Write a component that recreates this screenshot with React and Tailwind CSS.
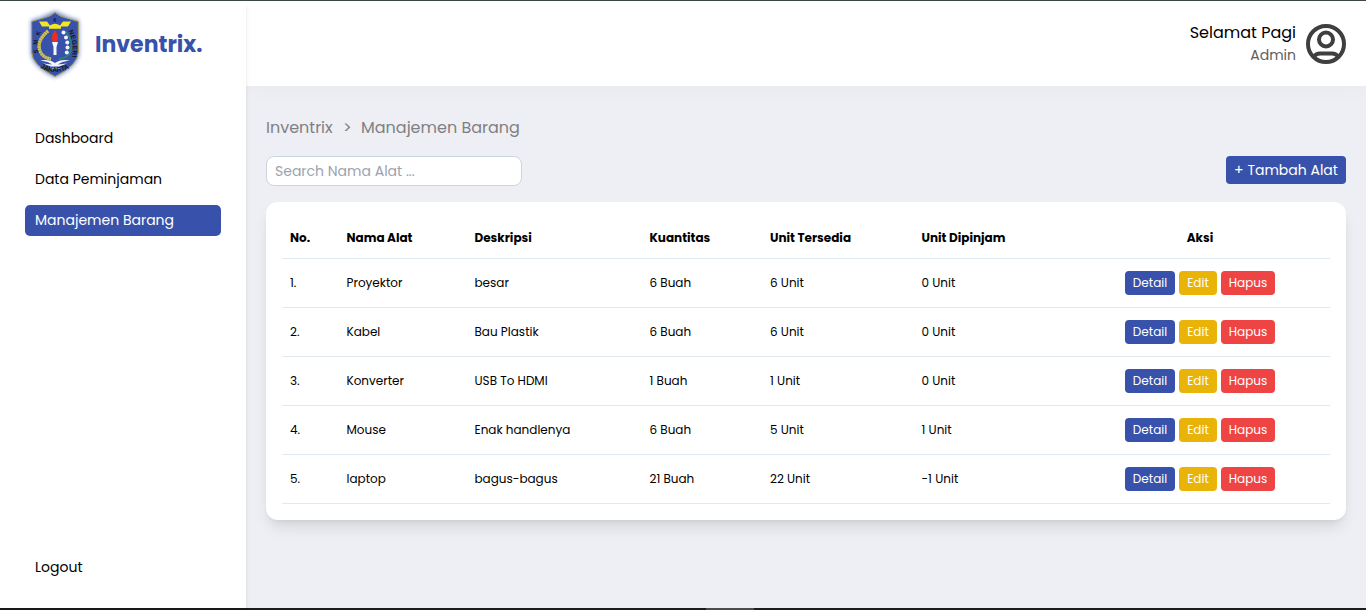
const items = [
  ['1.', 'Proyektor', 'besar', '6 Buah', '6 Unit', '0 Unit'],
  ['2.', 'Kabel', 'Bau Plastik', '6 Buah', '6 Unit', '0 Unit'],
  ['3.', 'Konverter', 'USB To HDMI', '1 Buah', '1 Unit', '0 Unit'],
  ['4.', 'Mouse', 'Enak handlenya', '6 Buah', '5 Unit', '1 Unit'],
  ['5.', 'laptop', 'bagus-bagus', '21 Buah', '22 Unit', '-1 Unit'],
];

const columns = ['No.', 'Nama Alat', 'Deskripsi', 'Kuantitas', 'Unit Tersedia', 'Unit Dipinjam'];

const gridCols = 'grid grid-cols-[56.5px_128px_175px_120.5px_151.5px_156.5px_260px] items-center border-b border-[#e2e8f0]';

function Emblem() {
  return (
    <svg className="h-20 w-[70px] shrink-0" viewBox="0 0 70 80">
      <defs>
        <filter id="glow" x="-30%" y="-30%" width="160%" height="160%">
          <feGaussianBlur stdDeviation="2" />
        </filter>
        <path id="rightArc" d="M48.500 27 Q54 38 52 55" />
        <path id="baseArc" d="M20 63.500 Q35 73 51 63" />
      </defs>
      <path d="M35 7 L48 13 L59 16.500 V50 Q57 63 35 73.500 Q13 63 11 50 V16.500 L22 13Z" fill="#3a54ad" opacity=".7" filter="url(#glow)" />
      <path d="M35 8.500 Q40 13 48 14.500 L58.300 17.500 V48 Q58 61 35 72.500 Q12 61 11.700 48 V17.500 L22 14.500 Q30 13 35 8.500Z" fill="#3852ab" stroke="#a5a250" strokeWidth="1" />
      <path d="M19 17.500 H27 L30 21.500 Q35 18 40 21.500 L43 17.500 H51 L48 22.500 H41 V24.800 H29 V22.500 H22Z" fill="#f5e61e" />
      <path d="M28 27 Q15 38 21 49 Q24 54 31 55" fill="none" stroke="#a8a468" strokeWidth="3" />
      <path d="M28 27 Q15 38 21 49 Q24 54 31 55" fill="none" stroke="#d6c850" strokeWidth="3.300" strokeDasharray="1.300 1.300" />
      <path d="M45 27 Q55 38 50 49 Q47 54 39 55" fill="none" stroke="#2a8475" strokeWidth="1.600" />
      <g fill="#f1f5fb">
        <circle cx="43.500" cy="28.500" r="2" />
        <circle cx="46" cy="33.500" r="2" />
        <circle cx="47.300" cy="38.500" r="2" />
        <circle cx="47.500" cy="43.500" r="2" />
        <circle cx="46.800" cy="48.500" r="2" />
      </g>
      <path d="M35 26 Q39.500 33 37 38 H33 Q30 33 35 26Z" fill="#ef2c20" />
      <path d="M32 38 H38 L36.500 43 V51 H33.500 V43Z" fill="#f7f8fc" />
      <path d="M20 56.500 Q29 54.500 35 59 Q41 54.500 50 56.500 Q41 57.500 38 60.500 L47 59.500 L39 62.500 H31 L23 59.500 L32 60.500 Q29 57.500 20 56.500Z" fill="#f2f5fc" />
      <path d="M30 64.200 H41" stroke="#c3cdec" strokeWidth="1" />
      <g fill="#15151c" fontFamily="Liberation Sans, sans-serif" fontWeight="700">
        <text x="33.200" y="18" fontSize="5.500">6</text>
        <text fontSize="6" textAnchor="middle" transform="translate(17.500 47.500) rotate(-90)">S</text>
        <text fontSize="6" textAnchor="middle" transform="translate(17.500 38.500) rotate(-82)">M</text>
        <text fontSize="6" textAnchor="middle" transform="translate(20 30) rotate(-68)">K</text>
        <text fontSize="6.500" textLength="27"><textPath href="#rightArc">NEGERI</textPath></text>
        <text fontSize="7" textLength="31" lengthAdjust="spacingAndGlyphs"><textPath href="#baseArc">JAKARTA</textPath></text>
      </g>
    </svg>
  );
}

function UserIcon() {
  return (
    <svg className="size-10 shrink-0" viewBox="0 0 40 40" fill="none" stroke="#3f3f3f" strokeWidth="4">
      <circle cx="20" cy="20" r="18" />
      <circle cx="20" cy="15.500" r="7" />
      <path d="M8 32.500 Q10 29.500 14 29.500 H26 Q30 29.500 32 32.500" />
    </svg>
  );
}

export default function App() {
  return (
    <div className="flex h-[610px] w-full flex-col overflow-hidden bg-[#eeeff4] font-['Poppins','Inter',sans-serif] text-black">
      <div className="h-px shrink-0 bg-[#404844]" />
      <div className="flex min-h-0 flex-1">
        <aside className="z-20 flex w-[246px] shrink-0 flex-col bg-white shadow-md">
          <div className="flex h-[85px] items-center gap-[5px] pl-5">
            <Emblem />
            <span className="pt-0.5 text-[22px] font-bold text-[#3852ab]">Inventrix.</span>
          </div>
          <nav className="mt-[37px] flex flex-1 flex-col gap-2.5 px-[25px] text-[14px]">
            <a className="flex h-[31px] items-center rounded px-2.5">Dashboard</a>
            <a className="flex h-[31px] items-center rounded px-2.5">Data Peminjaman</a>
            <a className="flex h-[31px] items-center rounded-[5px] bg-[#3852ab] px-2.5 text-white">Manajemen Barang</a>
          </nav>
          <a className="mb-[25px] flex h-[31px] items-center px-[35px] text-[14px]">Logout</a>
        </aside>
        <div className="flex min-w-0 flex-1 flex-col">
          <header className="z-10 flex h-[85px] shrink-0 items-center justify-end gap-2.5 bg-white pr-5 shadow-[0_4px_20px_rgba(0,0,0,0.025)]">
            <div className="flex flex-col items-end">
              <span className="text-[16px] leading-6">Selamat Pagi</span>
              <span className="text-[14px] leading-[21px] text-[#606060]">Admin</span>
            </div>
            <UserIcon />
          </header>
          <main className="flex flex-1 flex-col px-5 pt-[30px]">
            <div className="flex h-6 items-center text-[16px] text-[#808083]">
              <span className="w-[77px]">Inventrix</span>
              <span className="w-[18px]">&gt;</span>
              <span>Manajemen Barang</span>
            </div>
            <div className="mt-4 flex items-start justify-between">
              <input
                className="h-[30px] w-64 rounded-lg border border-[#cbd5e1] bg-white px-2 text-[14px] placeholder:text-[#9ca3af]"
                placeholder="Search Nama Alat ..."
              />
              <button className="h-7 w-[120px] rounded bg-[#3852ab] text-[14px] text-white">+ Tambah Alat</button>
            </div>
            <section className="mt-4 h-[318px] rounded-xl bg-white p-4 shadow-lg">
              <div className={`${gridCols} h-[41px] text-[12px] font-bold`}>
                {columns.map((c) => (
                  <span key={c} className="pl-2">{c}</span>
                ))}
                <span className="text-center">Aksi</span>
              </div>
              {items.map((row) => (
                <div key={row[0]} className={`${gridCols} h-[49px] text-[12px]`}>
                  {row.map((cell, i) => (
                    <span key={i} className="pl-2">{cell}</span>
                  ))}
                  <div className="flex justify-center gap-1 text-white">
                    <button className="h-6 w-[50px] rounded bg-[#3852ab]">Detail</button>
                    <button className="h-6 w-[38px] rounded bg-[#eab308]">Edit</button>
                    <button className="h-6 w-[54px] rounded bg-[#ef4444]">Hapus</button>
                  </div>
                </div>
              ))}
            </section>
          </main>
        </div>
      </div>
      <div className="flex h-0.5 shrink-0 justify-center bg-[#1c1c1f]">
        <div className="ml-[94px] w-12 bg-[#4b4b4e]" />
      </div>
    </div>
  );
}
